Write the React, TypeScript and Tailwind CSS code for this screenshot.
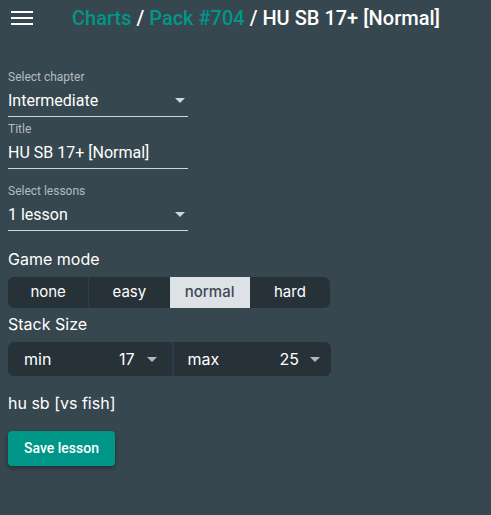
import { useState } from 'react';

const Caret = () => (
  <svg width="10" height="5" viewBox="0 0 10 5" className="fill-current">
    <path d="M0 0 L10 0 L5 5 Z" />
  </svg>
);

const Field = ({
  label,
  value,
  select,
  gap,
}: {
  label: string;
  value: string;
  select?: boolean;
  gap: string;
}) => (
  <div className={`w-[180px] ${gap}`}>
    <div className="text-[12px] leading-[16px] text-[#b4bcc0]">{label}</div>
    <div className="flex items-center justify-between h-[32px] border-b border-[#cfd5d8]">
      <span className="text-[16px] text-white">{value}</span>
      {select && (
        <span className="text-[#cfd5d8] mr-[3px]">
          <Caret />
        </span>
      )}
    </div>
  </div>
);

const App = () => {
  const [mode, setMode] = useState('normal');
  const modes = ['none', 'easy', 'normal', 'hard'];

  return (
    <div className="w-[491px] h-[515px] bg-[#37474f] text-white font-['Roboto',sans-serif]">
      <header className="flex items-center h-[36px]">
        <div className="ml-[11px] flex flex-col gap-[4px] w-[22px]">
          <span className="block h-[2px] bg-white" />
          <span className="block h-[2px] bg-white" />
          <span className="block h-[2px] bg-white" />
        </div>
        <h1 className="ml-[39px] text-[20px] font-medium">
          <span className="text-[#009688]">Charts</span> /{' '}
          <span className="text-[#009688]">Pack #704</span> / HU SB 17+ [Normal]
        </h1>
      </header>

      <div className="px-[8px]">
        <div className="pt-[33px]">
          <Field label="Select chapter" value="Intermediate" select gap="" />
          <Field label="Title" value="HU SB 17+ [Normal]" gap="mt-[4px]" />
          <Field label="Select lessons" value="1 lesson" select gap="mt-[14px]" />
        </div>

        <div className="font-['Inter',sans-serif]">
          <div className="mt-[17px] text-[16px] leading-[22px] text-white">Game mode</div>
          <div className="mt-[7px] flex w-[322px] h-[31px] rounded-[6px] bg-[#263238] overflow-hidden">
            {modes.map((m, i) => (
              <button
                key={m}
                onClick={() => setMode(m)}
                className={`flex-1 text-[15px] ${
                  mode === m ? 'bg-[#dde2e6] text-[#3d4852] font-medium' : 'text-white'
                } ${i > 0 && mode !== m && modes[i - 1] !== mode ? 'border-l border-[#2f3b4d]' : ''}`}
              >
                {m}
              </button>
            ))}
          </div>

          <div className="mt-[5px] text-[16px] leading-[22px] text-white">Stack Size</div>
          <div className="mt-[7px] flex w-[323px] h-[34px] rounded-[6px] bg-[#263238] overflow-hidden">
            <div className="flex items-center flex-1 pl-[16px] pr-[15px]">
              <span className="text-[16px] flex-1">min</span>
              <span className="text-[16px]">17</span>
              <span className="ml-[12px] text-[#b0b8bd]">
                <Caret />
              </span>
            </div>
            <div className="w-[2px] bg-[#2f3b4d]" />
            <div className="flex items-center flex-1 pl-[14px] pr-[11px]">
              <span className="text-[16px] flex-1">max</span>
              <span className="text-[16px]">25</span>
              <span className="ml-[11px] text-[#b0b8bd]">
                <Caret />
              </span>
            </div>
          </div>

          <div className="mt-[16px] text-[16px] leading-[22px] text-white">hu sb [vs fish]</div>
        </div>

        <button className="mt-[17px] w-[107px] h-[35px] rounded-[4px] bg-[#009688] text-white text-[14px] font-medium shadow-[0_2px_4px_rgba(0,0,0,0.35)] font-['Roboto',sans-serif]">
          Save lesson
        </button>
      </div>
    </div>
  );
};

export default App;
